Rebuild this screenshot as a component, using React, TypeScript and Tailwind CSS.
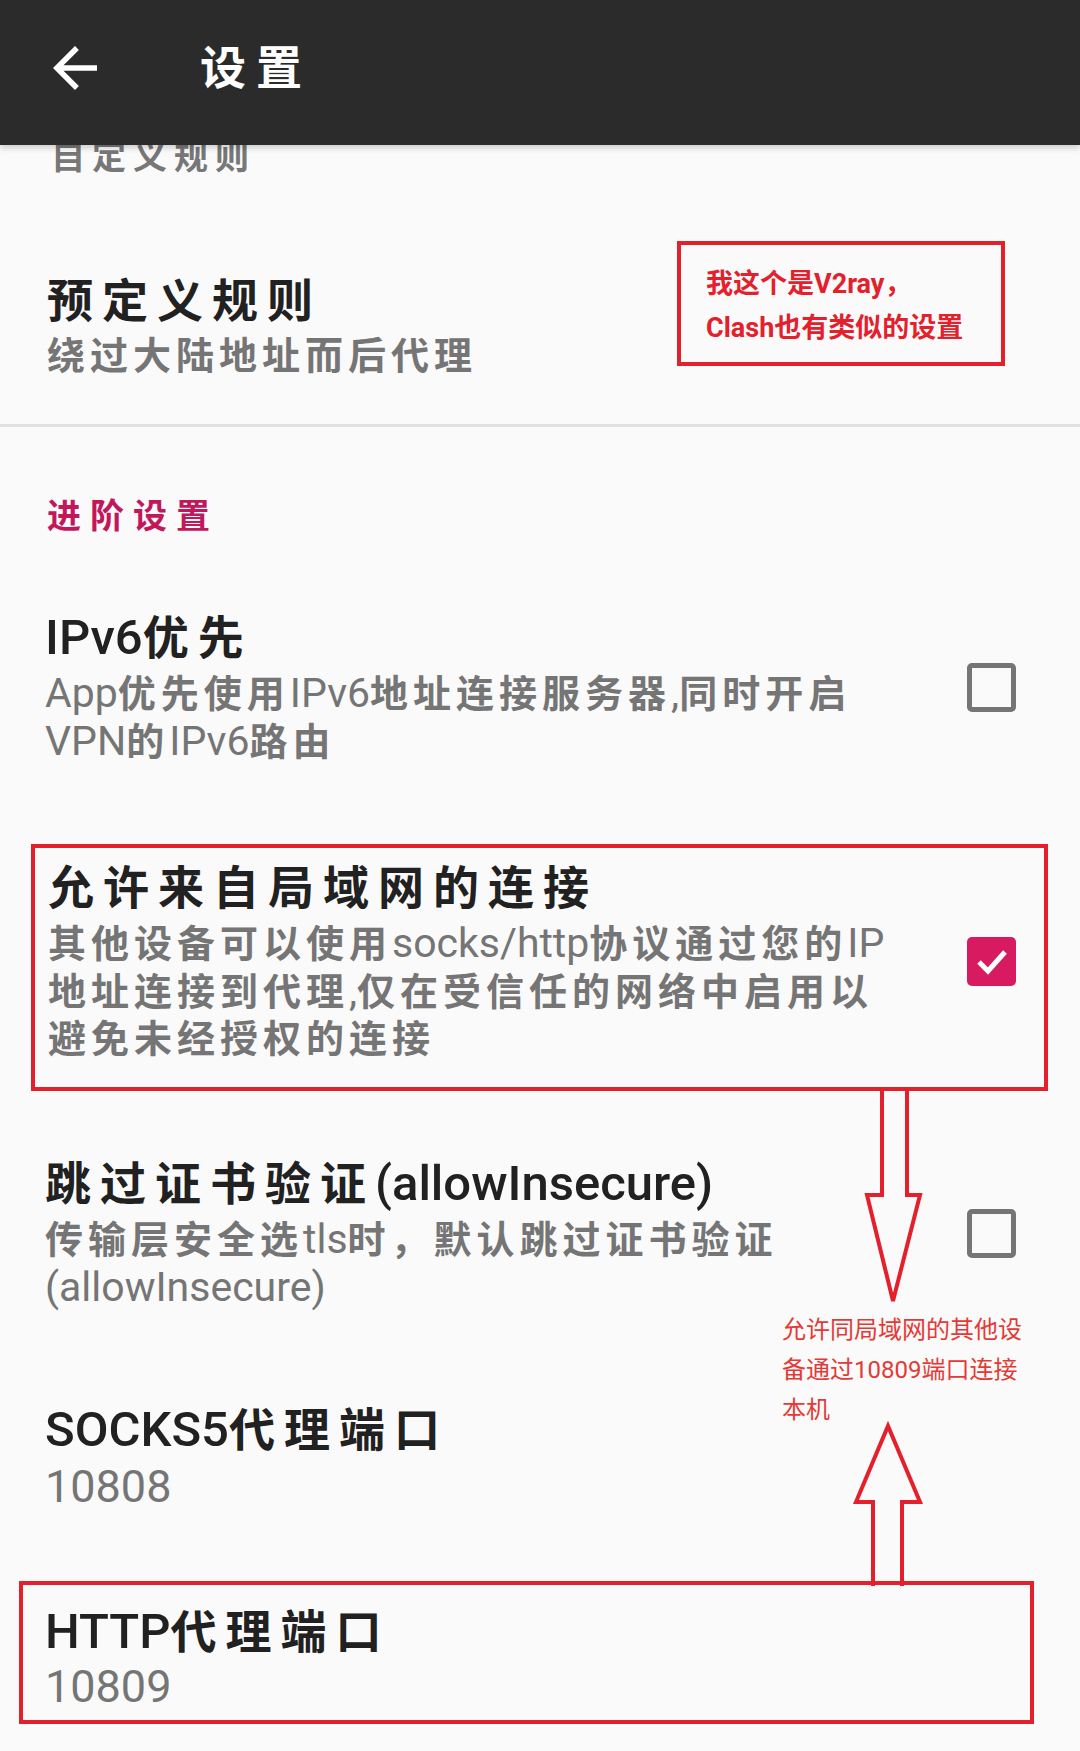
import React from "react";

const CJK = /([\u3000-\u9fff\uff00-\uffef]+)/;

// splits a string so Chinese and Latin runs can get their own size/tracking
function Txt({ text, cjk, lat }: { text: string; cjk: string; lat: string }) {
  const parts = text.split(CJK);
  return (
    <>
      {parts.map((p, i) =>
        p === "" ? null : (
          <span key={i} className={CJK.test(p) ? cjk : lat}>
            {p}
          </span>
        )
      )}
    </>
  );
}

function Title({ text }: { text: string }) {
  return (
    <div className="h-[56px] text-[46px] leading-[56px] text-[#212121] whitespace-nowrap">
      <Txt text={text} cjk="tracking-[9px] font-bold" lat="text-[49px] font-medium" />
    </div>
  );
}

function Sub({ lines }: { lines: string[] }) {
  return (
    <div className="mt-[3px] text-[38px] leading-[48px] text-[#757575] whitespace-nowrap">
      {lines.map((l) => (
        <div key={l} className="h-[48px]">
          <Txt text={l} cjk="tracking-[5px] font-bold" lat="text-[41px]" />
        </div>
      ))}
    </div>
  );
}

function Checkbox({ checked }: { checked?: boolean }) {
  if (checked) {
    return (
      <div className="flex h-[49px] w-[49px] shrink-0 items-center justify-center rounded-[5px] bg-[#d81b60]">
        <svg width="36" height="36" viewBox="0 0 36 36" fill="none">
          <polyline points="5,18 14,27 31,8" stroke="white" strokeWidth="5" />
        </svg>
      </div>
    );
  }
  return <div className="h-[49px] w-[49px] shrink-0 rounded-[5px] border-[5px] border-[#757575]" />;
}

export default function App() {
  return (
    <div className="relative min-h-[1751px] w-[1080px] overflow-hidden bg-[#fafafa] font-[Roboto,'Noto_Sans_CJK_SC',sans-serif]">
      {/* app bar */}
      <header className="relative z-10 flex h-[145px] items-center bg-[#2b2b2b] pb-[9px] pl-[42px] shadow-[0_3px_6px_rgba(0,0,0,0.18)]">
        <svg width="66" height="66" viewBox="0 0 24 24" fill="white">
          <path d="M20 11H7.83l5.59-5.59L12 4l-8 8 8 8 1.41-1.41L7.83 13H20v-2z" />
        </svg>
        <h1 className="ml-[92px] text-[46px] leading-[46px] font-bold tracking-[10px] text-white">设置</h1>
      </header>

      {/* scrolled-off item, cut by the bar */}
      <div className="-mt-[6px] pl-[51px] text-[34px] leading-[36px] font-bold tracking-[7px] text-[#777777]">
        自定义规则
      </div>

      <div className="mt-[98px] pl-[47px]">
        <Title text="预定义规则" />
        <Sub lines={["绕过大陆地址而后代理"]} />
      </div>

      <div className="mt-[44px] h-[3px] bg-[#e0e0e0]" />

      <div className="mt-[69px] pl-[47px] text-[34px] leading-[40px] font-bold tracking-[9px] text-[#c2185b]">
        进阶设置
      </div>

      <div className="mt-[74px] flex items-center justify-between pl-[45px] pr-[64px]">
        <div>
          <Title text="IPv6优先" />
          <Sub lines={["App优先使用IPv6地址连接服务器,同时开启", "VPN的IPv6路由"]} />
        </div>
        <Checkbox />
      </div>

      <div className="mt-[79px] ml-[31px] mr-[32px] flex items-center justify-between border-4 border-[#e3202b] pt-[12px] pb-[24px] pl-[13px] pr-[28px]">
        <div>
          <Title text="允许来自局域网的连接" />
          <Sub
            lines={[
              "其他设备可以使用socks/http协议通过您的IP",
              "地址连接到代理,仅在受信任的网络中启用以",
              "避免未经授权的连接",
            ]}
          />
        </div>
        <Checkbox checked />
      </div>

      <div className="mt-[65px] flex items-center justify-between pl-[45px] pr-[64px]">
        <div>
          <Title text="跳过证书验证(allowInsecure)" />
          <div className="mt-[1px]">
            <Sub lines={["传输层安全选tls时，默认跳过证书验证", "(allowInsecure)"]} />
          </div>
        </div>
        <Checkbox />
      </div>

      <div className="mt-[91px] pl-[45px]">
        <Title text="SOCKS5代理端口" />
        <div className="mt-[5px] h-[48px] text-[45px] leading-[48px] text-[#757575]">10808</div>
      </div>

      <div className="mt-[70px] ml-[19px] mr-[46px] border-4 border-[#e3202b] pt-[19px] pb-[9px] pl-[22px]">
        <Title text="HTTP代理端口" />
        <div className="mt-[3px] h-[48px] text-[45px] leading-[48px] text-[#757575]">10809</div>
      </div>

      {/* annotations drawn over the screenshot */}
      <div className="absolute left-[677px] top-[241px] h-[125px] w-[328px] border-4 border-[#e3202b] pl-[25px] pt-[17px] text-[27px] leading-[44px] font-bold text-[#e3202b] whitespace-nowrap">
        <div>我这个是V2ray，</div>
        <div>Clash也有类似的设置</div>
      </div>

      <svg className="absolute left-[860px] top-[1088px]" width="70" height="220" viewBox="0 0 70 220" fill="none">
        <path d="M22 0 L22 107 L7 107 L33 213 L60 107 L47 107 L47 0" stroke="#e3202b" strokeWidth="4" strokeLinejoin="miter" />
      </svg>

      <div className="absolute left-[782px] top-[1310px] text-[24px] leading-[40px] text-[#e53935] whitespace-nowrap">
        <div>允许同局域网的其他设</div>
        <div>备通过10809端口连接</div>
        <div>本机</div>
      </div>

      <svg className="absolute left-[850px] top-[1420px]" width="76" height="166" viewBox="0 0 76 166" fill="none">
        <path d="M23 166 L23 82 L6 82 L38 6 L70 82 L52 82 L52 166" stroke="#e3202b" strokeWidth="4" strokeLinejoin="miter" />
      </svg>
    </div>
  );
}
